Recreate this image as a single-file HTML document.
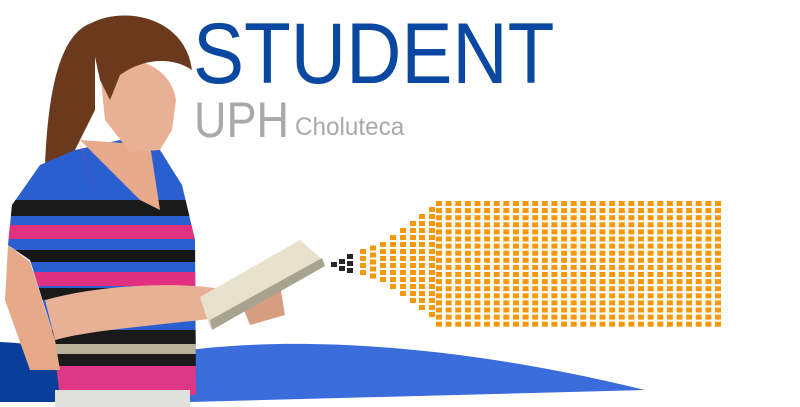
<!DOCTYPE html>
<html><head><meta charset="utf-8"><style>
html,body{margin:0;padding:0;background:#fff;width:800px;height:407px;overflow:hidden;position:relative;font-family:"Liberation Sans",sans-serif}
.t{position:absolute;white-space:nowrap}
</style></head><body>
<svg width="800" height="407" style="position:absolute;left:0;top:0">
<defs>
<clipPath id="shirt"><path d="M12,205 L40,165 L75,150 L120,140 L160,150 L182,185 L195,240 L196,395 L60,398 L52,330 L30,260 L8,245 Z"/></clipPath>
</defs>
<path d="M0,342 C60,345 150,360 190,402 L0,402 Z" fill="#083d9a"/>
<path d="M130,360 C240,335 420,335 645,390 L190,402 C170,385 150,370 130,360 Z" fill="#3b6cdc"/>
<path d="M95,22 C60,30 48,90 45,165 L70,160 L95,110 Z" fill="#6b3a1e"/>
<g clip-path="url(#shirt)">
<rect x="0" y="130" width="200" height="280" fill="#2b5fd0"/>
<rect x="0" y="200" width="200" height="16" fill="#1a1a1a"/>
<rect x="0" y="225" width="200" height="14" fill="#e0307f"/>
<rect x="0" y="250" width="200" height="12" fill="#161616"/>
<rect x="0" y="272" width="200" height="14" fill="#e0307f"/>
<rect x="0" y="288" width="200" height="12" fill="#1a1a1a"/>
<rect x="0" y="330" width="200" height="14" fill="#1a1a1a"/>
<rect x="0" y="344" width="200" height="10" fill="#b8b29a"/>
<rect x="0" y="354" width="200" height="12" fill="#1a1a1a"/>
<rect x="0" y="366" width="200" height="30" fill="#dd3786"/>
</g>
<path d="M80,140 L150,145 L160,210 L140,200 Z" fill="#e6a98a"/>
<path d="M78,140 L100,200 L82,150 Z" fill="#e0307f"/>
<path d="M100,70 C120,50 170,60 176,100 L172,130 L160,150 L130,152 L105,120 Z" fill="#e8b195"/>
<path d="M88,25 C120,5 185,15 192,70 C170,55 140,60 120,75 L110,100 L100,80 Z" fill="#6b3a1e"/>
<path d="M8,245 L30,262 L55,340 L60,370 L30,370 L5,300 Z" fill="#e6a98a"/>
<path d="M45,300 C100,285 170,282 215,288 L218,318 C160,325 90,330 55,340 Z" fill="#e8b195"/>
<path d="M240,300 L280,285 L285,315 L250,325 Z" fill="#d69d80"/>
<path d="M200,297 L300,240 L325,262 L210,328 Z" fill="#e8e2cc"/>
<path d="M210,320 L322,258 L325,266 L212,330 Z" fill="#a8a38e"/>
<rect x="55" y="390" width="135" height="17" fill="#e0e0dc"/>
<g fill="#262626">
<rect x="331" y="262" width="6" height="5"/>
<rect x="339" y="259" width="6" height="5"/><rect x="339" y="266" width="6" height="5"/>
<rect x="347" y="254" width="6" height="5"/><rect x="347" y="261" width="6" height="5"/><rect x="347" y="268" width="6" height="5"/>
</g>
<g id="grid" fill="#f7980a"></g>
</svg>
<div class="t" style="left:193px;top:5px;font-size:86px;color:#0a47a0;transform:scaleX(0.89);transform-origin:0 0">STUDENT</div>
<div class="t" style="left:194px;top:91px;font-size:50px;color:#a9a9a9;transform:scaleX(0.9);transform-origin:0 0">UPH</div>
<div class="t" style="left:295px;top:113px;font-size:25px;color:#a9a9a9;transform:scaleX(0.97);transform-origin:0 0">Choluteca</div>
<script>
var g=document.getElementById('grid'),s='';
var cols=[[360,4],[370,5],[380,6],[390,8],[400,10],[410,12],[419,14],[429,16]];
cols.forEach(function(c){var n=c[1],top=263-n*3.5;for(var i=0;i<n;i++)s+='<rect x="'+c[0]+'" y="'+(top+i*7).toFixed(1)+'" width="6" height="5"/>';});
for(var x=436;x<=724;x+=9.62){for(var r=0;r<18;r++)s+='<rect x="'+x.toFixed(1)+'" y="'+(201+r*7.1).toFixed(1)+'" width="6" height="5"/>';}
g.innerHTML=s;
</script>
</body></html>
